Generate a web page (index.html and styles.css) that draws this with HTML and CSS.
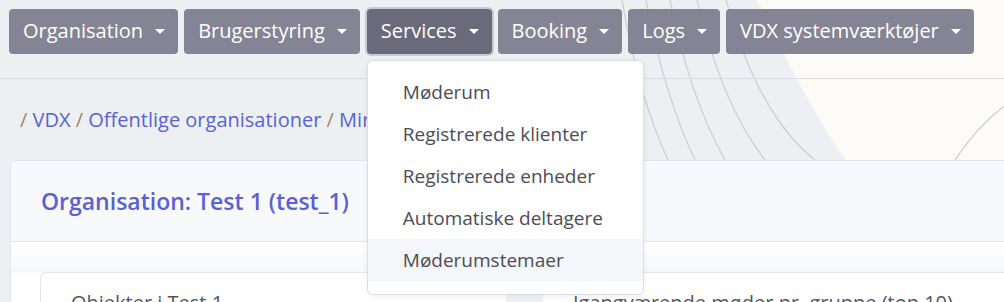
FILE: index.html
```html
<!DOCTYPE html>
<html lang="da">
<head>
<meta charset="utf-8">
<title>VDX</title>
<link rel="stylesheet" href="styles.css">
</head>
<body>
<svg class="backdrop" width="1004" height="160" viewBox="0 0 1004 160" aria-hidden="true">
  <rect x="0" y="0" width="1004" height="160" fill="#edf0f2"/>
  <path d="M757 0 C 785 55, 810 110, 846 160 L 1004 160 L 1004 0 Z" fill="#fcfbf8"/>
  <g fill="none" stroke="#c9cdd2" stroke-width="1.2">
    <path d="M622 0 Q 638 95 668 160"/>
    <path d="M646 0 Q 664 95 695 160"/>
    <path d="M670 0 Q 690 98 725 160"/>
    <path d="M697 0 Q 722 105 765 160"/>
    <path d="M726 0 Q 758 115 815 160"/>
    <path d="M1004 106 Q 976 128 955 160"/>
  </g>
</svg>

<header class="topnav">
  <nav class="menu">
    <div class="menu-item"><button class="menu-btn">Organisation<span class="caret"></span></button></div>
    <div class="menu-item"><button class="menu-btn">Brugerstyring<span class="caret"></span></button></div>
    <div class="menu-item open">
      <button class="menu-btn active">Services<span class="caret"></span></button>
      <ul class="dropdown">
        <li class="dd-item">Møderum</li>
        <li class="dd-item">Registrerede klienter</li>
        <li class="dd-item">Registrerede enheder</li>
        <li class="dd-item">Automatiske deltagere</li>
        <li class="dd-item hover">Møderumstemaer</li>
      </ul>
    </div>
    <div class="menu-item"><button class="menu-btn">Booking<span class="caret"></span></button></div>
    <div class="menu-item"><button class="menu-btn">Logs<span class="caret"></span></button></div>
    <div class="menu-item"><button class="menu-btn">VDX systemværktøjer<span class="caret"></span></button></div>
  </nav>
</header>

<div class="crumbs">
  <p class="trail"><span class="sep">/</span> <a class="crumb">VDX</a> <span class="sep">/</span> <a class="crumb">Offentlige organisationer</a> <span class="sep">/</span> <a class="crumb">Mine organisationer</a></p>
</div>

<main class="card">
  <div class="card-head">
    <h2 class="card-title">Organisation: Test 1 (test_1)</h2>
  </div>
  <div class="card-body">
    <section class="inner">
      <div class="inner-left">Objekter i Test 1</div>
      <div class="inner-gap"></div>
      <div class="inner-right">Igangværende møder pr. gruppe (top 10)</div>
    </section>
  </div>
</main>
</body>
</html>
```
FILE: styles.css
```css
* { box-sizing: border-box; }

html, body {
  margin: 0;
  padding: 0;
}

body {
  width: 1004px;
  height: 302px;
  overflow: hidden;
  position: relative;
  background: #edf0f2;
  font-family: "Open Sans", "Noto Sans", "Liberation Sans", sans-serif;
}

.backdrop {
  position: absolute;
  top: 0;
  left: 0;
  z-index: 0;
}

.topnav {
  position: relative;
  z-index: 5;
  height: 79px;
  border-bottom: 1px solid #d8dce0;
  padding: 9px 0 0 9px;
}

.menu {
  display: flex;
  gap: 6px;
}

.menu-item {
  position: relative;
}

.menu-btn {
  display: flex;
  align-items: center;
  gap: 12px;
  height: 45px;
  padding: 0 13px 1px 14px;
  border: none;
  border-radius: 4px;
  background: #858494;
  color: #ffffff;
  font-family: inherit;
  font-size: 20px;
  line-height: 1;
  white-space: nowrap;
  cursor: pointer;
}

.menu-btn.active {
  background: #6b6a7b;
  box-shadow: 0 0 0 2px #c9c9d1;
  margin-left: 1px;
}

.caret {
  width: 0;
  height: 0;
  border-left: 5px solid transparent;
  border-right: 5px solid transparent;
  border-top: 5.5px solid #ffffff;
}

.dropdown {
  position: absolute;
  top: 51px;
  left: 1px;
  width: 277px;
  margin: 0;
  padding: 10px 0 13px;
  list-style: none;
  background: #ffffff;
  border: 1px solid #dcdde3;
  border-radius: 6px;
  box-shadow: 0 2px 6px rgba(60, 60, 80, 0.08);
  z-index: 10;
}

.dd-item {
  height: 42px;
  display: flex;
  align-items: center;
  padding-left: 35px;
  padding-bottom: 1px;
  font-size: 19px;
  color: #4c4c57;
  white-space: nowrap;
}

.dd-item.hover {
  background: #f5f6fa;
}

.crumbs {
  position: relative;
  z-index: 1;
  height: 81px;
  display: flex;
  align-items: center;
  padding-left: 20px;
}

.trail {
  margin: 0 0 1px;
  font-size: 20px;
  white-space: nowrap;
}

.sep {
  color: #a88466;
}

.crumb {
  color: #5b62d6;
}

.card {
  position: relative;
  z-index: 1;
  margin-left: 10px;
  width: 1040px;
  background: #ffffff;
  border: 1px solid #e3e5ec;
  border-radius: 6px;
}

.card-head {
  height: 81px;
  display: flex;
  align-items: center;
  padding-left: 30px;
  background: #f8f9fd;
  border-bottom: 1px solid #e4e6ee;
  border-radius: 6px 6px 0 0;
}

.card-title {
  margin: 0;
  font-size: 23px;
  font-weight: 600;
  color: #5a61d4;
}

.card-body {
  padding: 30px 0 0 29px;
  background: linear-gradient(#ffffff, #f6f7f9 30px, #ffffff 31px);
}

.inner {
  display: flex;
  height: 80px;
  border: 1px solid #e3e5ec;
  border-radius: 6px;
  background: #ffffff;
  font-size: 20px;
  color: #55555f;
}

.inner-left {
  width: 465px;
  padding: 16px 0 0 30px;
  white-space: nowrap;
}

.inner-gap {
  width: 37px;
  margin-top: 20px;
  background: #f1f2f5;
}

.inner-right {
  padding: 16px 0 0 30px;
  white-space: nowrap;
}
```
